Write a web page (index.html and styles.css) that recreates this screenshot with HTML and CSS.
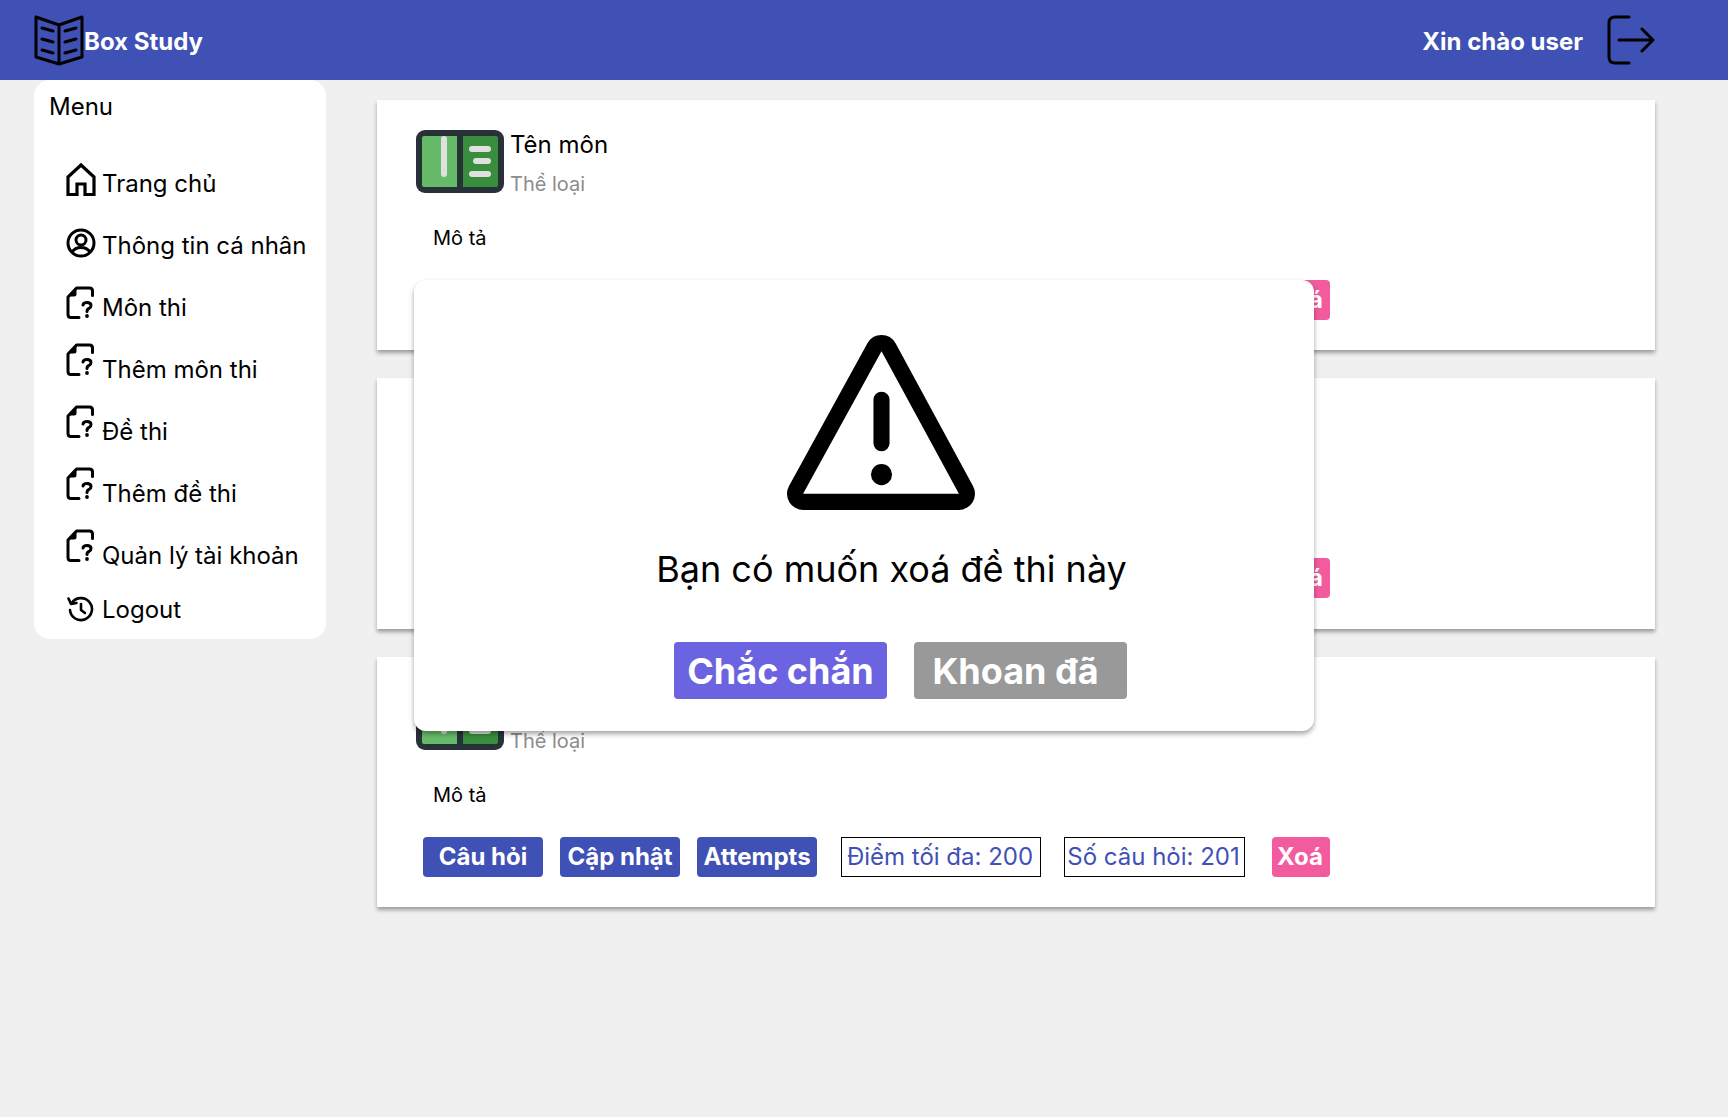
FILE: index.html
```html
<!DOCTYPE html>
<html lang="vi">

<head>
    <meta charset="UTF-8">
    <title>Box Study</title>
    <link rel="stylesheet" href="styles.css">
</head>

<body>
    <svg class="sprite" xmlns="http://www.w3.org/2000/svg">
        <symbol id="file-question" viewBox="0 0 28 33">
            <path d="M13 31.500H5Q2 31.500 2 28.500V11L10.500 2H23.500Q26.500 2 26.500 5V9.500" fill="none" stroke="currentColor" stroke-width="3" stroke-linecap="round" stroke-linejoin="round" />
            <path d="M10.500 2V8Q10.500 10.500 8 10.500H2.500Z" fill="currentColor" />
            <path d="M17 19Q17.500 16.500 21 16.500Q25 16.500 25 19.500Q25 21.500 23 22.500Q21 23.300 21 25.500" fill="none" stroke="currentColor" stroke-width="3" stroke-linecap="round" />
            <circle cx="21" cy="30" r="1.900" fill="currentColor" />
        </symbol>
        <symbol id="app-logo" viewBox="0 0 88 63">
            <rect width="88" height="63" rx="9" fill="#263238" />
            <path d="M8 6H41V57H8Q6 57 6 55V8Q6 6 8 6Z" fill="#66bb6a" />
            <path d="M47 6H80Q82 6 82 8V55Q82 57 80 57H47Z" fill="#388e3c" />
            <rect x="25" y="6" width="6" height="41" rx="3" fill="#e0e0e0" />
            <rect x="53" y="16" width="22" height="6" rx="3" fill="#e0e0e0" />
            <rect x="57" y="28" width="18" height="6" rx="3" fill="#e0e0e0" />
            <rect x="53" y="41" width="22" height="6" rx="3" fill="#e0e0e0" />
        </symbol>
    </svg>

    <header class="topbar">
        <div class="brand">
            <svg class="brand-logo" viewBox="0 0 50 51" fill="none" stroke="#000" stroke-width="3" stroke-linecap="round" stroke-linejoin="round">
                <path d="M25 10L2 2V42L25 49L48 42V2L25 10V49" />
                <path d="M8 13L19 16M8 24L19 27M8 35L19 38M42 13L31 16M42 24L31 27M42 35L31 38" />
            </svg>
            <span class="topbar-text">Box Study</span>
        </div>
        <div class="greeting">
            <span class="topbar-text">Xin chào user</span>
            <svg class="exit-icon" viewBox="0 0 48 50" fill="none" stroke="#000" stroke-width="3" stroke-linecap="round" stroke-linejoin="round">
                <path d="M22 2H8Q2 2 2 8V42Q2 48 8 48H22" />
                <path d="M12 25H46M35 14L46 25L35 36" />
            </svg>
        </div>
    </header>

    <div class="layout">
        <aside class="sidebar">
            <div class="sidebar-title">Menu</div>
            <ul class="menu">
                <li class="menu-item menu-home">
                    <svg class="menu-icon" viewBox="0 0 30 34">
                        <path d="M15 3L2 15V32.500H11V22H19V32.500H28V15Z" fill="none" stroke="#000" stroke-width="3.200" stroke-linejoin="miter" />
                    </svg>
                    <span>Trang chủ</span>
                </li>
                <li class="menu-item menu-user">
                    <svg class="menu-icon" viewBox="0 0 30 30" fill="none" stroke="#000" stroke-width="3">
                        <circle cx="15" cy="15" r="13" />
                        <circle cx="15" cy="12" r="5" />
                        <path d="M6 24Q9 19.500 15 19.500Q21 19.500 24 24" />
                    </svg>
                    <span>Thông tin cá nhân</span>
                </li>
                <li class="menu-item">
                    <svg class="menu-icon file-icon file-icon-low"><use href="#file-question" /></svg>
                    <span>Môn thi</span>
                </li>
                <li class="menu-item">
                    <svg class="menu-icon file-icon"><use href="#file-question" /></svg>
                    <span>Thêm môn thi</span>
                </li>
                <li class="menu-item">
                    <svg class="menu-icon file-icon"><use href="#file-question" /></svg>
                    <span>Đề thi</span>
                </li>
                <li class="menu-item">
                    <svg class="menu-icon file-icon"><use href="#file-question" /></svg>
                    <span>Thêm đề thi</span>
                </li>
                <li class="menu-item">
                    <svg class="menu-icon file-icon"><use href="#file-question" /></svg>
                    <span>Quản lý tài khoản</span>
                </li>
                <li class="menu-item menu-logout">
                    <svg class="menu-icon" viewBox="0 0 26 26" fill="none" stroke="#000" stroke-width="2.600" stroke-linecap="round" stroke-linejoin="round">
                        <path d="M4.500 7.500A11 11 0 1 1 3 14" />
                        <path d="M1.500 2.500L4 8L9.500 7" />
                        <path d="M14 8V14L18 17" />
                    </svg>
                    <span>Logout</span>
                </li>
            </ul>
        </aside>

        <main class="content">
            <section class="card">
                <div class="card-head">
                    <svg class="card-logo"><use href="#app-logo" /></svg>
                    <div>
                        <div class="card-title">Tên môn</div>
                        <div class="card-subtitle">Thể loại</div>
                    </div>
                </div>
                <p class="card-desc">Mô tả</p>
                <div class="card-actions">
                    <a class="btn">Câu hỏi</a>
                    <a class="btn">Cập nhật</a>
                    <a class="btn">Attempts</a>
                    <span class="stat stat-score">Điểm tối đa: 200</span>
                    <span class="stat stat-count">Số câu hỏi: 201</span>
                    <a class="btn btn-danger">Xoá</a>
                </div>
            </section>
            <section class="card">
                <div class="card-head">
                    <svg class="card-logo"><use href="#app-logo" /></svg>
                    <div>
                        <div class="card-title">Tên môn</div>
                        <div class="card-subtitle">Thể loại</div>
                    </div>
                </div>
                <p class="card-desc">Mô tả</p>
                <div class="card-actions">
                    <a class="btn">Câu hỏi</a>
                    <a class="btn">Cập nhật</a>
                    <a class="btn">Attempts</a>
                    <span class="stat stat-score">Điểm tối đa: 200</span>
                    <span class="stat stat-count">Số câu hỏi: 201</span>
                    <a class="btn btn-danger">Xoá</a>
                </div>
            </section>
            <section class="card">
                <div class="card-head">
                    <svg class="card-logo"><use href="#app-logo" /></svg>
                    <div>
                        <div class="card-title">Tên môn</div>
                        <div class="card-subtitle">Thể loại</div>
                    </div>
                </div>
                <p class="card-desc">Mô tả</p>
                <div class="card-actions">
                    <a class="btn">Câu hỏi</a>
                    <a class="btn">Cập nhật</a>
                    <a class="btn">Attempts</a>
                    <span class="stat stat-score">Điểm tối đa: 200</span>
                    <span class="stat stat-count">Số câu hỏi: 201</span>
                    <a class="btn btn-danger">Xoá</a>
                </div>
            </section>
        </main>
    </div>

    <div class="modal">
        <svg class="modal-icon" viewBox="0 0 188 174" preserveAspectRatio="none">
            <path fill-rule="evenodd" d="M80 9.250A16 16 0 0 1 108 9.250L185 150.250A16 16 0 0 1 171 174H16A16 16 0 0 1 2 150.250ZM94 17L16 158H171Z" />
            <rect x="86" y="57" width="16" height="59" rx="8" />
            <circle cx="94" cy="139" r="10.500" />
        </svg>
        <p class="modal-text">Bạn có muốn xoá đề thi này</p>
        <div class="modal-actions">
            <button class="modal-btn modal-confirm">Chắc chắn</button>
            <button class="modal-btn modal-cancel">Khoan đã</button>
        </div>
    </div>
</body>

</html>
```

FILE: styles.css
```css
* {
    box-sizing: border-box;
}

body {
    margin: 0;
    min-height: 1117px;
    background: #f0f0f0;
    font-family: "Inter", "Noto Sans", sans-serif;
    color: #000;
}

.sprite {
    display: none;
}

.topbar {
    display: flex;
    justify-content: space-between;
    align-items: center;
    height: 80px;
    padding: 0 73px 0 34px;
    background: #3f51b5;
    color: #fff;
    font-size: 24px;
    font-weight: 700;
}

.topbar-text {
    margin-top: 2px;
}

.brand {
    display: flex;
    align-items: center;
}

.brand-logo {
    width: 50px;
    height: 51px;
}

.greeting {
    display: flex;
    align-items: center;
    gap: 24px;
}

.exit-icon {
    width: 48px;
    height: 50px;
}

.layout {
    display: flex;
    align-items: flex-start;
    padding-left: 34px;
}

.sidebar {
    width: 292px;
    height: 559px;
    padding: 12px 15px 0;
    background: #fff;
    border-radius: 16px;
    font-size: 24px;
}

.sidebar-title {
    line-height: 29px;
}

.menu {
    margin: 15px 0 0;
    padding: 0 0 0 17px;
    list-style: none;
}

.menu-item {
    display: flex;
    align-items: flex-end;
    gap: 8px;
    height: 62px;
    line-height: 29px;
    white-space: nowrap;
}

.menu-icon {
    flex: none;
    width: 28px;
    height: 33px;
}

.file-icon {
    margin-bottom: 8px;
}

.file-icon-low {
    margin-bottom: 3px;
}

.menu-home .menu-icon {
    width: 30px;
    height: 34px;
    margin-right: -2px;
    margin-bottom: 2px;
}

.menu-user .menu-icon {
    width: 30px;
    height: 30px;
    margin-right: -2px;
    margin-bottom: 2px;
}

.menu-logout {
    height: 54px;
}

.menu-logout .menu-icon {
    height: 26px;
    margin-bottom: 2px;
}

.content {
    display: flex;
    flex-direction: column;
    gap: 28px;
    width: 1278px;
    margin-left: 51px;
    padding-top: 20px;
}

.card {
    height: 250.400px;
    padding: 30px 39px 0;
    background: #fff;
    box-shadow: 0 3px 4px rgba(0, 0, 0, 0.35);
}

.card-head {
    display: flex;
    gap: 6px;
}

.card-logo {
    flex: none;
    width: 88px;
    height: 63px;
}

.card-title {
    font-size: 24px;
    line-height: 29px;
}

.card-subtitle {
    margin-top: 13px;
    font-size: 20px;
    line-height: 24px;
    color: #8c8c8c;
}

.card-desc {
    margin: 30px 0 0 17px;
    font-size: 20px;
    line-height: 24px;
}

.card-actions {
    display: flex;
    margin: 30px 0 0 7px;
}

.btn {
    width: 120px;
    height: 40px;
    margin-right: 17px;
    background: #3f51b5;
    border-radius: 4px;
    color: #fff;
    font-size: 24px;
    font-weight: 700;
    line-height: 40px;
    text-align: center;
    white-space: nowrap;
}

.btn-danger {
    width: 58px;
    margin: 0 0 0 27px;
    padding-right: 2px;
    background: #f25c9f;
}

.stat {
    height: 40px;
    padding-right: 2px;
    border: 1.500px solid #000;
    color: #3f51b5;
    font-size: 24px;
    line-height: 37px;
    text-align: center;
    white-space: nowrap;
}

.stat-score {
    width: 200px;
    margin-left: 7px;
}

.stat-count {
    width: 181px;
    margin-left: 23px;
}

.modal {
    position: absolute;
    top: 280px;
    left: 414px;
    width: 900px;
    height: 451px;
    padding-top: 54px;
    background: #fff;
    border-radius: 12px;
    box-shadow: 0 3px 5px rgba(0, 0, 0, 0.35);
    text-align: center;
}

.modal-icon {
    display: block;
    width: 189px;
    height: 176px;
    margin: 0 0 0 373px;
}

.modal-text {
    margin: 37px 0 0 55px;
    font-size: 36px;
    line-height: 44px;
}

.modal-actions {
    display: flex;
    gap: 27px;
    margin: 51px 0 0 260px;
}

.modal-btn {
    width: 213px;
    height: 57px;
    padding: 0;
    border: none;
    border-radius: 4px;
    color: #fff;
    font-family: inherit;
    font-size: 36px;
    font-weight: 700;
}

.modal-confirm {
    background: #6c63e0;
}

.modal-cancel {
    padding-right: 10px;
    background: #999;
}
```
